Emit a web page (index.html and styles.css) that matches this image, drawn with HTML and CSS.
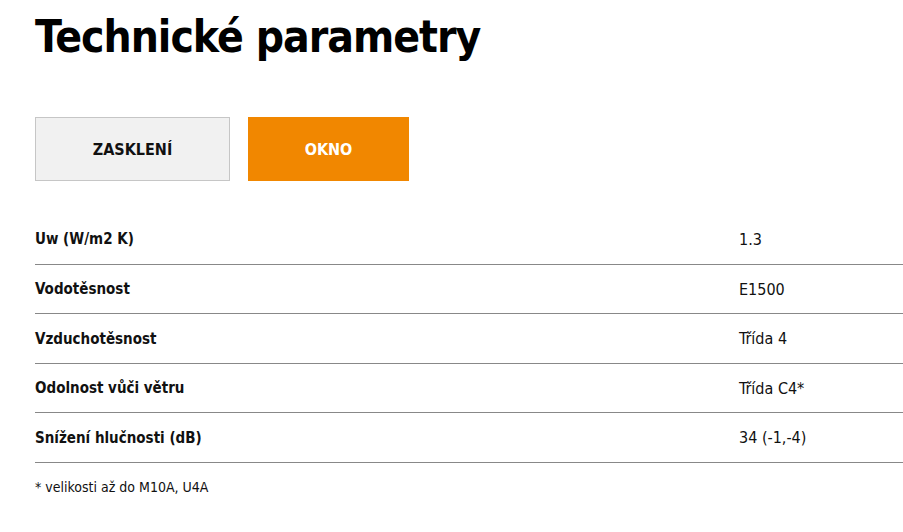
FILE: index.html
```html
<!DOCTYPE html>
<html lang="cs">
<head>
<meta charset="utf-8">
<title>Technické parametry</title>
<link rel="stylesheet" href="styles.css">
</head>
<body>
<main class="params">
  <h1 class="params-title">Technické parametry</h1>
  <div class="tabs">
    <button class="tab">ZASKLENÍ</button>
    <button class="tab tab-active">OKNO</button>
  </div>
  <div class="table">
    <div class="row"><div class="label">Uw (W/m2 K)</div><div class="value">1.3</div></div>
    <div class="row"><div class="label">Vodotěsnost</div><div class="value">E1500</div></div>
    <div class="row"><div class="label">Vzduchotěsnost</div><div class="value">Třída 4</div></div>
    <div class="row"><div class="label">Odolnost vůči větru</div><div class="value">Třída C4*</div></div>
    <div class="row"><div class="label">Snížení hlučnosti (dB)</div><div class="value">34 (-1,-4)</div></div>
  </div>
  <p class="note">* velikosti až do M10A, U4A</p>
</main>
</body>
</html>
```
FILE: styles.css
```css
html, body {
  margin: 0;
  padding: 0;
  background: #fff;
}
body {
  font-family: "DejaVu Sans Condensed", "DejaVu Sans", sans-serif;
  font-stretch: condensed;
  color: #111;
  overflow: hidden;
}
.params {
  padding: 0 0 0 35px;
  width: 900px;
}
.params-title {
  margin: 0;
  padding-top: 11px;
  font-size: 44px;
  line-height: 52px;
  font-weight: 700;
  letter-spacing: -1px;
  color: #000;
}
.tabs {
  display: flex;
  gap: 18px;
  margin-top: 54px;
}
.tab {
  font-family: inherit;
  font-stretch: condensed;
  height: 64px;
  width: 195px;
  border: 1px solid #c6c6c6;
  background: #f1f1f1;
  color: #111;
  font-size: 16px;
  font-weight: 700;
  padding: 0;
}
.tab-active {
  width: 161px;
  background: #f18700;
  border-color: #f18700;
  color: #fff;
}
.table {
  margin-top: 33px;
}
.row {
  display: flex;
  align-items: center;
  height: 49px;
  border-bottom: 1px solid #888;
}
.row:first-child {
  height: 50px;
}
.row:nth-child(even) {
  height: 48px;
}
.label {
  width: 704px;
  font-size: 15px;
  font-weight: 700;
}
.value {
  font-size: 16px;
}
.note {
  margin: 16px 0 0;
  font-size: 14px;
}
```
